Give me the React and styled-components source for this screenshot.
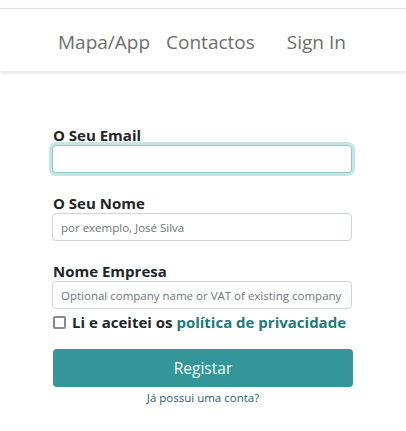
import React from "react";
import styled, { createGlobalStyle } from "styled-components";

const Global = createGlobalStyle`
  html, body { margin: 0; padding: 0; background: #fff; }
  body { font-family: "Open Sans", "Noto Sans", sans-serif; color: #212529; }
  * { box-sizing: border-box; }
`;

const Page = styled.div`
  padding-top: 8px;
  width: 406px;
`;

const NavBar = styled.nav`
  border-top: 1px solid #dedede;
  height: 63px;
  background: #fff;
  box-shadow: 0 2px 4px rgba(0, 0, 0, 0.12);
  display: flex;
  align-items: center;
  padding-left: 58px;
  padding-top: 4px;
`;

const NavLink = styled.a`
  font-size: 19px;
  color: #6d6d6d;
  text-decoration: none;
  margin-right: ${(p) => p.$gap || 0}px;
  line-height: 1;
`;

const Form = styled.form`
  width: 300px;
  margin: 0 auto 0 53px;
  padding-top: 54px;
  display: flex;
  flex-direction: column;
`;

const Field = styled.div`
  display: flex;
  flex-direction: column;
  margin-bottom: ${(p) => p.$mb ?? 20}px;
`;

const Label = styled.label`
  font-size: 15px;
  font-weight: 700;
  line-height: 20px;
  color: #212529;
`;

const Input = styled.input`
  height: 28px;
  width: 300px;
  margin-left: -1px;
  border: 1px solid ${(p) => (p.$focus ? "#8fcaca" : "#ced4da")};
  border-radius: 4px;
  padding: 0 8px;
  font-family: inherit;
  font-size: 11.5px;
  color: #495057;
  outline: none;
  box-shadow: ${(p) => (p.$focus ? "0 0 0 3px #c8e5e5" : "none")};
  &::placeholder { color: #6c757d; }
`;

const CheckRow = styled.label`
  display: flex;
  align-items: center;
  gap: 6px;
  font-size: 15px;
  font-weight: 700;
  line-height: 20px;
  margin-bottom: 17px;
`;

const Box = styled.span`
  width: 13px;
  height: 13px;
  border: 2px solid #8a8a92;
  border-radius: 2px;
  flex: none;
`;

const Policy = styled.a`
  color: #1e7a7d;
  text-decoration: none;
`;

const Button = styled.button`
  height: 38px;
  width: 300px;
  border: none;
  border-radius: 4px;
  background: #35969a;
  color: #f4f8f8;
  font-family: inherit;
  font-size: 15.5px;
  cursor: pointer;
`;

const Already = styled.a`
  display: block;
  text-align: center;
  margin-top: 3px;
  font-size: 11.5px;
  line-height: 16px;
  color: #1f5f70;
  text-decoration: none;
`;

export default function App() {
  return (
    <Page>
      <Global />
      <NavBar>
        <NavLink href="#" $gap={16}>Mapa/App</NavLink>
        <NavLink href="#" $gap={32}>Contactos</NavLink>
        <NavLink href="#">Sign In</NavLink>
      </NavBar>
      <Form>
        <Field>
          <Label>O Seu Email</Label>
          <Input $focus type="email" />
        </Field>
        <Field>
          <Label>O Seu Nome</Label>
          <Input placeholder="por exemplo, José Silva" />
        </Field>
        <Field $mb={3}>
          <Label>Nome Empresa</Label>
          <Input placeholder="Optional company name or VAT of existing company" />
        </Field>
        <CheckRow>
          <Box />
          <span>
            Li e aceitei os <Policy href="#">política de privacidade</Policy>
          </span>
        </CheckRow>
        <Button type="button">Registar</Button>
        <Already href="#">Já possui uma conta?</Already>
      </Form>
    </Page>
  );
}
